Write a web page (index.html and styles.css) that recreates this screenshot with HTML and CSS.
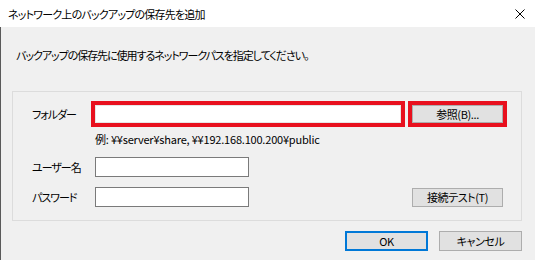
FILE: index.html
```html
<!DOCTYPE html>
<html lang="ja">
<head>
<meta charset="utf-8">
<link rel="stylesheet" href="styles.css">
</head>
<body>
<div class="window">
  <div class="titlebar">
    <span class="title">ネットワーク上のバックアップの保存先を追加</span>
    <svg class="close" width="10" height="10" viewBox="0 0 10 10"><path d="M0.5 0.5 L9.5 9.5 M9.5 0.5 L0.5 9.5" stroke="#000" stroke-width="1" fill="none"/></svg>
  </div>
  <div class="content">
    <p class="intro">バックアップの保存先に使用するネットワークパスを指定してください。</p>
    <div class="group">
      <div class="row">
        <span class="label">フォルダー</span>
        <div class="hl hl-input"><div class="field field-wide"></div></div>
        <div class="hl hl-btn"><div class="btn">参照(B)...</div></div>
      </div>
      <div class="example">例: ¥¥server¥share, ¥¥192.168.100.200¥public</div>
      <div class="row row-user">
        <span class="label">ユーザー名</span>
        <div class="field"></div>
      </div>
      <div class="row row-pass">
        <span class="label">パスワード</span>
        <div class="field"></div>
        <div class="btn btn-test">接続テスト(T)</div>
      </div>
    </div>
    <div class="footer">
      <div class="btn btn-footer btn-ok">OK</div>
      <div class="btn btn-footer">キャンセル</div>
    </div>
  </div>
</div>
</body>
</html>
```

FILE: styles.css
```css
html, body {
  margin: 0;
  padding: 0;
}
body {
  width: 535px;
  height: 260px;
  overflow: hidden;
  background: #f0f0f0;
  font-family: "Noto Sans CJK JP", "Noto Sans", sans-serif;
  font-size: 11px;
  letter-spacing: -1px;
  font-feature-settings: "palt";
  color: #000;
}
.window {
  width: 535px;
  height: 260px;
  display: flex;
  flex-direction: column;
}
.titlebar {
  height: 27px;
  flex: none;
  background: #fff;
  display: flex;
  align-items: center;
  justify-content: space-between;
  padding: 0 10px 0 8px;
  box-sizing: border-box;
}
.title {
  line-height: 16px;
  letter-spacing: -0.8px;
}
.close {
  display: block;
}
.content {
  flex: 1;
  border-left: 1px solid #5a5a5a;
  display: flex;
  flex-direction: column;
  padding: 0 13px 0 11px;
}
.intro {
  margin: 20px 0 0 4px;
  line-height: 16px;
  letter-spacing: -1.05px;
}
.group {
  margin-top: 28px;
  height: 130px;
  box-sizing: border-box;
  border: 1px solid #dcdcdc;
  padding: 9px 0 0 19px;
}
.row {
  display: flex;
  align-items: center;
}
.label {
  width: 63px;
  flex: none;
  line-height: 16px;
}
.row .hl-input {
  margin-left: -4px;
}
.hl {
  border: 4px solid #e8101e;
  box-sizing: border-box;
  height: 26px;
}
.hl-input {
  width: 314px;
}
.hl-btn {
  width: 99px;
  margin-left: 3px;
}
.field {
  width: 154px;
  height: 20px;
  box-sizing: border-box;
  background: #fff;
  border: 1px solid #7a7a7a;
}
.field-wide {
  width: 100%;
  height: 100%;
  border: 1px solid #e6e6e6;
}
.btn {
  box-sizing: border-box;
  background: #e1e1e1;
  border: 1px solid #adadad;
  display: flex;
  align-items: center;
  justify-content: center;
  line-height: 16px;
  letter-spacing: -0.4px;
}
.hl-btn .btn {
  height: 100%;
}
.example {
  margin: 5px 0 0 63px;
  line-height: 14px;
  letter-spacing: -0.2px;
}
.row-user {
  margin-top: 11px;
}
.row-pass {
  margin-top: 10px;
}
.btn-test {
  width: 91px;
  height: 19px;
  margin-left: 163px;
}
.footer {
  display: flex;
  justify-content: flex-end;
  gap: 11px;
  margin-top: 10px;
}
.btn-footer {
  width: 83px;
  height: 20px;
}
.btn-ok {
  border: 2px solid #0078d7;
}
```
